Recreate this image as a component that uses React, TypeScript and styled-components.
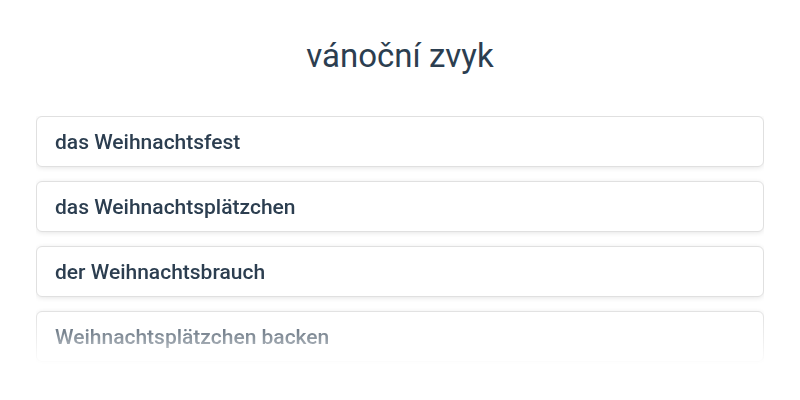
import React from 'react';
import styled, { createGlobalStyle } from 'styled-components';

const GlobalStyle = createGlobalStyle`
  html, body {
    margin: 0;
    padding: 0;
    background: #ffffff;
    font-family: Roboto, "Noto Sans", sans-serif;
    color: #2c3e50;
  }
`;

const Page = styled.div`
  width: 800px;
  height: 400px;
  overflow: hidden;
  box-sizing: border-box;
  padding: 36px 36px 0;
`;

const Title = styled.h1`
  margin: 0 0 40px;
  text-align: center;
  font-size: 33px;
  font-weight: 400;
  line-height: 40px;
  color: #2c3e50;
`;

const List = styled.div`
  display: flex;
  flex-direction: column;
  gap: 14px;
  height: 256px;
  overflow: hidden;
  -webkit-mask-image: linear-gradient(to bottom, #000 0, #000 192px, rgba(0, 0, 0, 0.5) 225px, transparent 250px);
  mask-image: linear-gradient(to bottom, #000 0, #000 192px, rgba(0, 0, 0, 0.5) 225px, transparent 250px);
`;

const Card = styled.div`
  flex-shrink: 0;
  height: 51px;
  box-sizing: border-box;
  display: flex;
  align-items: center;
  padding: 0 18px;
  border: 1px solid #e0e0e0;
  border-radius: 6px;
  background: #fff;
  box-shadow: 0 1px 5px rgba(0, 0, 0, 0.1);
  font-size: 21px;
  font-weight: 500;
  color: #2c3e50;
`;

const words = [
  'das Weihnachtsfest',
  'das Weihnachtsplätzchen',
  'der Weihnachtsbrauch',
  'Weihnachtsplätzchen backen',
];

export default function App() {
  return (
    <>
      <GlobalStyle />
      <Page>
        <Title>vánoční zvyk</Title>
        <List>
          {words.map((w) => (
            <Card key={w}>{w}</Card>
          ))}
        </List>
      </Page>
    </>
  );
}
